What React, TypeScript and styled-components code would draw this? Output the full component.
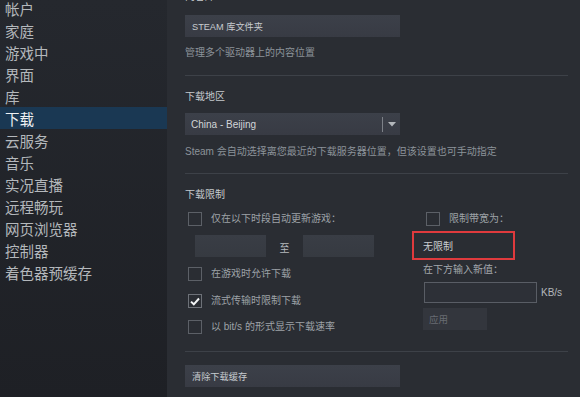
import React from "react";
import styled, { createGlobalStyle } from "styled-components";

const Global = createGlobalStyle`
  html, body { margin: 0; padding: 0; background: #2a2d33; }
  body { font-family: "Liberation Sans", "Noto Sans CJK SC", sans-serif; }
  * { box-sizing: border-box; }
`;

const Shell = styled.div`
  display: flex;
  width: 580px;
  height: 397px;
  overflow: hidden;
  background: #2a2d33;
`;

const Sidebar = styled.nav`
  width: 167px;
  flex: none;
  background: linear-gradient(to bottom, #25282e, #1e2025);
  display: flex;
  flex-direction: column;
`;

const NavList = styled.div`
  margin-top: -3px;
  display: flex;
  flex-direction: column;
`;

const NavItem = styled.div<{ $active?: boolean }>`
  height: 22px;
  line-height: 20px;
  padding: 2px 0 0 5px;
  font-size: 14.5px;
  font-family: "Noto Sans CJK SC", sans-serif;
  color: ${(p) => (p.$active ? "#eef1f3" : "#b4b8bc")};
  background: ${(p) => (p.$active ? "#1a3853" : "transparent")};
  white-space: nowrap;
`;

const Main = styled.main`
  flex: 1;
  padding: 0 12px 0 18px;
  display: flex;
  flex-direction: column;
  font-size: 10px;
`;

const Title = styled.div<{ $mt: number }>`
  margin-top: ${(p) => p.$mt}px;
  line-height: 14px;
  height: 14px;
  font-size: 10px;
  color: #c6cace;
`;

const Desc = styled.div<{ $mt: number }>`
  margin-top: ${(p) => p.$mt}px;
  line-height: 14px;
  height: 14px;
  font-size: 10px;
  color: #8c939a;
  white-space: nowrap;
`;

const WideButton = styled.div<{ $mt: number }>`
  margin-top: ${(p) => p.$mt}px;
  width: 215px;
  height: 22px;
  padding-left: 7px;
  display: flex;
  align-items: center;
  font-size: 9.2px;
  color: #c8ccd0;
  background: linear-gradient(to bottom, #3c4049, #383b44);
`;

const Divider = styled.div<{ $mt: number }>`
  margin-top: ${(p) => p.$mt}px;
  height: 1px;
  background: #3d4148;
`;

const Dropdown = styled.div<{ $mt: number }>`
  margin-top: ${(p) => p.$mt}px;
  width: 215px;
  height: 22px;
  display: flex;
  align-items: center;
  background: linear-gradient(to bottom, #3c4049, #383b44);
`;

const DropText = styled.span`
  padding-left: 6px;
  font-size: 10px;
  color: #d2d5d8;
  flex: 1;
`;

const DropSep = styled.span`
  width: 1px;
  height: 15px;
  background: #7d8188;
`;

const DropArrow = styled.span`
  width: 17px;
  display: flex;
  justify-content: center;
  align-items: center;
`;

const LimitGrid = styled.div<{ $mt: number }>`
  margin-top: ${(p) => p.$mt}px;
  display: grid;
  grid-template-columns: 227px 1fr;
`;

const Column = styled.div`
  display: flex;
  flex-direction: column;
`;

const CheckRow = styled.div<{ $mt?: number; $indent: number }>`
  margin-top: ${(p) => p.$mt ?? 0}px;
  padding-left: ${(p) => p.$indent}px;
  height: 14px;
  display: flex;
  align-items: center;
`;

const Box = styled.span<{ $checked?: boolean }>`
  width: 14px;
  height: 14px;
  flex: none;
  border: 1px solid ${(p) => (p.$checked ? "#6d7178" : "#5c6067")};
  display: flex;
  align-items: center;
  justify-content: center;
`;

const CheckLabel = styled.span`
  margin-left: 9px;
  font-size: 10px;
  line-height: 14px;
  color: #9da2a7;
  white-space: nowrap;
`;

const TimeRow = styled.div`
  margin-top: 9px;
  padding-left: 10px;
  display: flex;
  align-items: center;
`;

const TimeInput = styled.div`
  width: 71px;
  height: 22px;
  background: linear-gradient(to bottom, #393d45, #363a41);
`;

const TimeSep = styled.span`
  width: 37px;
  text-align: center;
  font-size: 10px;
  color: #b5b9bd;
  padding-top: 3px;
`;

const RedBox = styled.div`
  margin-top: 5px;
  width: 103px;
  height: 29px;
  border: 2px solid #df3a3d;
  padding-left: 9px;
  display: flex;
  align-items: center;
  font-size: 10px;
  color: #c9ccd0;
`;

const Hint = styled.div`
  margin-top: 3px;
  padding-left: 11px;
  line-height: 14px;
  font-size: 10px;
  color: #a4a8ad;
`;

const InputRow = styled.div`
  margin-top: 5px;
  padding-left: 12px;
  display: flex;
  align-items: center;
`;

const RateInput = styled.div`
  width: 113px;
  height: 21px;
  border: 1px solid #595d65;
  background: #2d3037;
`;

const Unit = styled.span`
  margin-left: 4px;
  font-size: 10px;
  color: #b3b7bb;
`;

const ApplyButton = styled.div`
  margin-top: 5px;
  margin-left: 11px;
  width: 64px;
  height: 22px;
  padding-left: 6px;
  display: flex;
  align-items: center;
  font-size: 9.5px;
  color: #686c73;
  background: #33363d;
`;

const navItems = [
  "帐户",
  "家庭",
  "游戏中",
  "界面",
  "库",
  "下载",
  "云服务",
  "音乐",
  "实况直播",
  "远程畅玩",
  "网页浏览器",
  "控制器",
  "着色器预缓存",
];

const Check = ({ checked }: { checked?: boolean }) => (
  <Box $checked={checked}>
    {checked && (
      <svg width="10" height="9" viewBox="0 0 10 9">
        <path d="M1 4.6 L3.8 7.3 L9 1.5" fill="none" stroke="#f2f4f5" strokeWidth="2" />
      </svg>
    )}
  </Box>
);

export default function App() {
  return (
    <>
      <Global />
      <Shell>
        <Sidebar>
          <NavList>
            {navItems.map((n, i) => (
              <NavItem key={n} $active={i === 5}>
                {n}
              </NavItem>
            ))}
          </NavList>
        </Sidebar>
        <Main>
          <Title $mt={-10}>内容库</Title>
          <WideButton $mt={11}>STEAM 库文件夹</WideButton>
          <Desc $mt={9}>管理多个驱动器上的内容位置</Desc>
          <Divider $mt={15} />

          <Title $mt={14}>下载地区</Title>
          <Dropdown $mt={9}>
            <DropText>China - Beijing</DropText>
            <DropSep />
            <DropArrow>
              <svg width="8" height="5" viewBox="0 0 8 5">
                <path d="M0 0 H8 L4 4.5 Z" fill="#b3b7bb" />
              </svg>
            </DropArrow>
          </Dropdown>
          <Desc $mt={10}>Steam 会自动选择离您最近的下载服务器位置，但该设置也可手动指定</Desc>
          <Divider $mt={14} />

          <Title $mt={14}>下载限制</Title>
          <LimitGrid $mt={10}>
            <Column>
              <CheckRow $indent={3}>
                <Check />
                <CheckLabel>仅在以下时段自动更新游戏：</CheckLabel>
              </CheckRow>
              <TimeRow>
                <TimeInput />
                <TimeSep>至</TimeSep>
                <TimeInput />
              </TimeRow>
              <CheckRow $indent={3} $mt={10}>
                <Check />
                <CheckLabel>在游戏时允许下载</CheckLabel>
              </CheckRow>
              <CheckRow $indent={3} $mt={13}>
                <Check checked />
                <CheckLabel>流式传输时限制下载</CheckLabel>
              </CheckRow>
              <CheckRow $indent={3} $mt={12}>
                <Check />
                <CheckLabel>以 bit/s 的形式显示下载速率</CheckLabel>
              </CheckRow>
            </Column>
            <Column>
              <CheckRow $indent={14}>
                <Check />
                <CheckLabel>限制带宽为：</CheckLabel>
              </CheckRow>
              <RedBox>无限制</RedBox>
              <Hint>在下方输入新值：</Hint>
              <InputRow>
                <RateInput />
                <Unit>KB/s</Unit>
              </InputRow>
              <ApplyButton>应用</ApplyButton>
            </Column>
          </LimitGrid>
          <Divider $mt={17} />
          <WideButton $mt={13}>清除下载缓存</WideButton>
        </Main>
      </Shell>
    </>
  );
}
